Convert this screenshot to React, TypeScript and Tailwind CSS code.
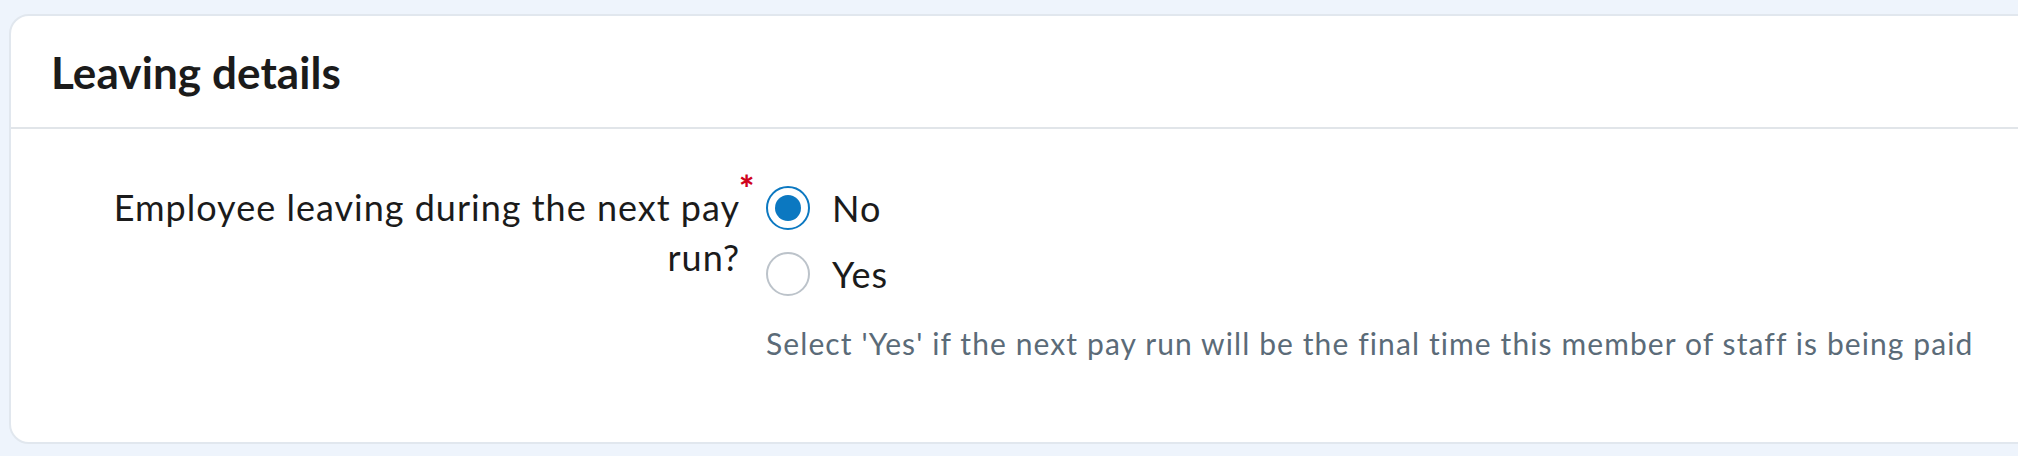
const font = { fontFamily: "Lato, 'Open Sans', sans-serif" };

function Radio({ checked }: { checked: boolean }) {
  return (
    <span
      className={
        checked
          ? "flex h-[44px] w-[44px] shrink-0 items-center justify-center rounded-full border-[2.5px] border-[#0b78c1] bg-white"
          : "flex h-[44px] w-[44px] shrink-0 items-center justify-center rounded-full border-[2.5px] border-[#bcc3ca] bg-white"
      }
    >
      {checked && <span className="h-[26px] w-[26px] rounded-full bg-[#0b78c1]" />}
    </span>
  );
}

export default function App() {
  return (
    <div
      className="h-[456px] w-[2018px] overflow-hidden bg-[#eef4fc] pl-[9px] pt-[14px]"
      style={font}
    >
      <div className="h-[430px] w-[2060px] rounded-[20px] border-2 border-[#e1e7ee] bg-white">
        <div className="flex h-[113px] items-center border-b-2 border-[#e1e5e9] pl-[40px]">
          <h2 className="text-[44px] font-bold tracking-[0.1px] text-[#1b1b1b]">Leaving details</h2>
        </div>

        <div className="flex items-start pt-[46px]">
          <div className="mt-[7px] flex w-[729px] justify-end">
            <p className="relative w-[660px] text-right text-[36px] leading-[50px] tracking-[1px] text-[#1b1b1b]">
              Employee leaving during the next pay run?
              <span className="absolute left-full top-[-12px] ml-[-1px] text-[36px] font-black leading-none tracking-normal text-[#d0021b]">
                *
              </span>
            </p>
          </div>

          <div className="ml-[26px] flex flex-col">
            <label className="flex h-[66px] items-center gap-[22px]">
              <Radio checked />
              <span className="text-[36px] tracking-[1px] text-[#1b1b1b]">No</span>
            </label>
            <label className="flex h-[66px] items-center gap-[22px]">
              <Radio checked={false} />
              <span className="text-[36px] tracking-[1px] text-[#1b1b1b]">Yes</span>
            </label>
            <p className="mt-[16px] text-[30px] leading-[40px] tracking-[1.1px] text-[#5b6b78]">
              Select 'Yes' if the next pay run will be the final time this member of staff is being paid
            </p>
          </div>
        </div>
      </div>
    </div>
  );
}
